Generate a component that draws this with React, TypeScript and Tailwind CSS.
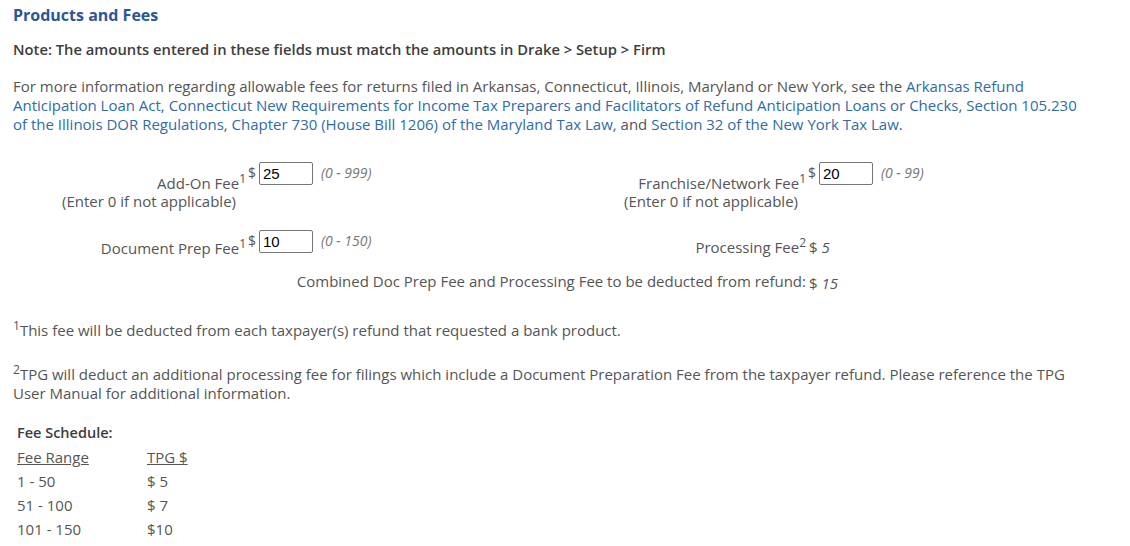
import React from 'react';

const font = { fontFamily: '"Open Sans", "Noto Sans", sans-serif' };

const FeeInput: React.FC<{ value: string; range: string }> = ({ value, range }) => (
  <div className="flex items-start">
    <span className="pt-[2px] pl-[2px] pr-[3px] text-[14px] leading-[18px]">$</span>
    <input
      defaultValue={value}
      className="w-[54px] h-[23px] border border-[#767676] rounded-[2px] px-[3px] text-[15px] text-black bg-white outline-none"
      style={{ fontFamily: '"Liberation Sans", Arial, sans-serif' }}
    />
    <span className="ml-[8px] pt-[1px] text-[14px] italic text-[#777]">{range}</span>
  </div>
);

const Sup: React.FC<{ n: string }> = ({ n }) => (
  <span className="relative -top-[6px] text-[12px] leading-none">{n}</span>
);

const App: React.FC = () => {
  return (
    <div className="min-h-[546px] bg-white text-[#555] text-[15px] leading-[19px] px-[13px] pt-[4px]" style={font}>
      <h1 className="text-[16px] font-bold text-[#2b5797] leading-[22px]">Products and Fees</h1>
      <p className="mt-[14px] font-semibold text-[#3d3d3d] text-[14.75px]">
        Note: The amounts entered in these fields must match the amounts in Drake &gt; Setup &gt; Firm
      </p>
      <p className="mt-[18px] pr-[40px]">
        For more information regarding allowable fees for returns filed in Arkansas, Connecticut, Illinois, Maryland or New York, see the{' '}
        <a className="text-[#2f6ca8]">Arkansas Refund Anticipation Loan Act</a>,{' '}
        <a className="text-[#2f6ca8]">Connecticut New Requirements for Income Tax Preparers and Facilitators of Refund Anticipation Loans or Checks</a>,{' '}
        <a className="text-[#2f6ca8]">Section 105.230 of the Illinois DOR Regulations</a>,{' '}
        <a className="text-[#2f6ca8]">Chapter 730 (House Bill 1206) of the Maryland Tax Law</a>, and{' '}
        <a className="text-[#2f6ca8]">Section 32 of the New York Tax Law</a>.
      </p>

      <div className="mt-[28px] -ml-[13px] grid grid-cols-[246px_314px_246px_1fr] gap-y-[20px]">
        <div className="text-right pt-[12px] leading-[18px]">
          <div>
            Add-On Fee<Sup n="1" />
          </div>
          <div className="pr-[10px]">(Enter 0 if not applicable)</div>
        </div>
        <FeeInput value="25" range="(0 - 999)" />
        <div className="text-right pt-[12px] leading-[18px]">
          <div>
            Franchise/Network Fee<Sup n="1" />
          </div>
          <div className="pr-[8px]">(Enter 0 if not applicable)</div>
        </div>
        <FeeInput value="20" range="(0 - 99)" />

        <div className="text-right pt-[9px] leading-[18px]">
          Document Prep Fee<Sup n="1" />
        </div>
        <FeeInput value="10" range="(0 - 150)" />
        <div className="text-right pt-[8px] leading-[18px]">
          Processing Fee<Sup n="2" />
        </div>
        <div className="pt-[8px] leading-[18px]">
          <span className="pl-[3px]">$ </span>
          <span className="italic">5</span>
        </div>

        <div className="col-span-3 text-right -mt-[5px] leading-[18px]">
          Combined Doc Prep Fee and Processing Fee to be deducted from refund:
        </div>
        <div className="-mt-[3px] leading-[18px]">
          <span className="pl-[3px]">$ </span>
          <span className="italic">15</span>
        </div>
      </div>

      <p className="mt-[29px]">
        <Sup n="1" />This fee will be deducted from each taxpayer(s) refund that requested a bank product.
      </p>
      <p className="mt-[25px] pr-[40px]">
        <Sup n="2" />TPG will deduct an additional processing fee for filings which include a Document Preparation Fee from the taxpayer refund. Please reference the TPG User Manual for additional information.
      </p>

      <div className="mt-[18px] pl-[4px] grid grid-cols-[130px_1fr] leading-[24px]">
        <div className="col-span-2 font-semibold text-[#3d3d3d] text-[14.5px]">Fee Schedule:</div>
        <div><span className="underline">Fee Range</span></div>
        <div><span className="underline">TPG $</span></div>
        <div>1 - 50</div>
        <div>$ 5</div>
        <div>51 - 100</div>
        <div>$ 7</div>
        <div>101 - 150</div>
        <div>$10</div>
      </div>
    </div>
  );
};

export default App;
